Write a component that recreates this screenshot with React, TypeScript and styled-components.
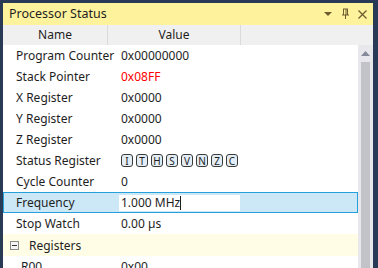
import styled, { createGlobalStyle } from "styled-components";

const Global = createGlobalStyle`
  html, body {
    margin: 0;
    padding: 0;
    background: #293a56;
    overflow: hidden;
  }
  body {
    font-family: "Noto Sans", "Open Sans", sans-serif;
    font-size: 12px;
    color: #1e1e1e;
  }
`;

const Frame = styled.div`
  padding: 3px 5px 0 3px;
  height: 268px;
  box-sizing: border-box;
`;

const Panel = styled.div`
  display: flex;
  flex-direction: column;
  width: 370px;
  height: 265px;
  background: #ffffff;
  overflow: hidden;
`;

const TitleBar = styled.div`
  display: flex;
  align-items: center;
  height: 22px;
  background: #fff29d;
  padding: 0 5px 0 6px;
  flex-shrink: 0;
`;

const Title = styled.div`
  flex: 1;
  font-size: 12.5px;
  line-height: 22px;
  color: #1e1e1e;
`;

const TitleIcons = styled.div`
  display: flex;
  align-items: center;
  gap: 7px;
`;

const Header = styled.div`
  display: flex;
  height: 20px;
  background: #f0f0f0;
  flex-shrink: 0;
`;

const HeadCell = styled.div<{ $w?: number }>`
  width: ${(p) => (p.$w ? `${p.$w}px` : "auto")};
  flex: ${(p) => (p.$w ? "none" : "1")};
  text-align: center;
  line-height: 19px;
  border-right: ${(p) => (p.$w ? "1px solid #dadada" : "none")};
  box-sizing: border-box;
`;

const Body = styled.div`
  display: flex;
  flex: 1;
  min-height: 0;
`;

const List = styled.div`
  flex: 1;
  overflow: hidden;
`;

const Row = styled.div<{ $selected?: boolean; $group?: boolean }>`
  display: flex;
  align-items: center;
  height: ${(p) => (p.$group ? 22 : 21)}px;
  box-sizing: border-box;
  background: ${(p) =>
    p.$selected ? "#cce8f6" : p.$group ? "#fffde6" : "transparent"};
  border: 1px solid ${(p) => (p.$selected ? "#26a0da" : "transparent")};
`;

const NameCell = styled.div<{ $indent?: number }>`
  width: 104px;
  flex: none;
  padding-left: ${(p) => p.$indent ?? 12}px;
  box-sizing: border-box;
  white-space: nowrap;
`;

const ValueCell = styled.div<{ $red?: boolean }>`
  flex: 1;
  padding-left: 13px;
  color: ${(p) => (p.$red ? "#ff0000" : "#1e1e1e")};
  white-space: nowrap;
  display: flex;
  align-items: center;
`;

const Editor = styled.div`
  width: 121px;
  height: 16px;
  margin-left: 11px;
  padding-left: 2px;
  background: #ffffff;
  display: flex;
  align-items: center;
  box-sizing: border-box;
`;

const Caret = styled.span`
  display: inline-block;
  width: 1px;
  height: 14px;
  background: #1e1e1e;
`;

const Flags = styled.div`
  display: flex;
  gap: 3px;
`;

const Flag = styled.span`
  display: inline-flex;
  align-items: center;
  justify-content: center;
  width: 12px;
  height: 13px;
  border: 1px solid #3a3a3a;
  border-radius: 3px;
  background: #e3edf5;
  font-size: 10px;
  line-height: 1;
  box-sizing: border-box;
`;

const GroupToggle = styled.span`
  display: inline-flex;
  align-items: center;
  justify-content: center;
  width: 9px;
  height: 9px;
  border: 1px solid #8b8b8b;
  background: #f4f4f4;
  margin: 0 10px 0 6px;
  box-sizing: border-box;
  &::after {
    content: "";
    width: 5px;
    height: 1px;
    background: #333;
  }
`;

const GroupName = styled.div`
  display: flex;
  align-items: center;
`;

const Scrollbar = styled.div`
  width: 15px;
  flex: none;
  background: #e8e8ec;
  display: flex;
  flex-direction: column;
  align-items: center;
  padding-top: 6px;
  box-sizing: border-box;
`;

const Thumb = styled.div`
  width: 9px;
  flex: 1;
  margin-top: 6px;
  background: #c2c3c9;
`;

const rows: [string, string, boolean?][] = [
  ["Program Counter", "0x00000000"],
  ["Stack Pointer", "0x08FF", true],
  ["X Register", "0x0000"],
  ["Y Register", "0x0000"],
  ["Z Register", "0x0000"],
];

const flags = ["I", "T", "H", "S", "V", "N", "Z", "C"];

export default function App() {
  return (
    <>
      <Global />
      <Frame>
        <Panel>
          <TitleBar>
            <Title>Processor Status</Title>
            <TitleIcons>
              <svg width="10" height="10" viewBox="0 0 10 10">
                <path d="M1 3h8L5 7z" fill="#6b5d2e" />
              </svg>
              <svg width="10" height="12" viewBox="0 0 10 12">
                <path
                  d="M3 1h5M3.5 1v6M7.5 1v6M6 1v6M2 7h7M5.5 7v4"
                  stroke="#6b5d2e"
                  strokeWidth="1"
                  fill="none"
                />
              </svg>
              <svg width="11" height="11" viewBox="0 0 11 11">
                <path d="M1.5 1.5l8 8M9.5 1.5l-8 8" stroke="#6b5d2e" strokeWidth="1.3" />
              </svg>
            </TitleIcons>
          </TitleBar>
          <Header>
            <HeadCell $w={105}>Name</HeadCell>
            <HeadCell $w={133}>Value</HeadCell>
            <HeadCell />
          </Header>
          <Body>
            <List>
              {rows.map(([n, v, red]) => (
                <Row key={n}>
                  <NameCell>{n}</NameCell>
                  <ValueCell $red={red}>{v}</ValueCell>
                </Row>
              ))}
              <Row>
                <NameCell>Status Register</NameCell>
                <ValueCell>
                  <Flags>
                    {flags.map((f) => (
                      <Flag key={f}>{f}</Flag>
                    ))}
                  </Flags>
                </ValueCell>
              </Row>
              <Row>
                <NameCell>Cycle Counter</NameCell>
                <ValueCell>0</ValueCell>
              </Row>
              <Row $selected>
                <NameCell>Frequency</NameCell>
                <Editor>
                  1.000 MHz
                  <Caret />
                </Editor>
              </Row>
              <Row>
                <NameCell>Stop Watch</NameCell>
                <ValueCell>0.00 µs</ValueCell>
              </Row>
              <Row $group>
                <GroupName>
                  <GroupToggle />
                  Registers
                </GroupName>
              </Row>
              <Row>
                <NameCell $indent={17}>R00</NameCell>
                <ValueCell>0x00</ValueCell>
              </Row>
            </List>
            <Scrollbar>
              <svg width="9" height="5" viewBox="0 0 9 5">
                <path d="M0 5L4.5 0L9 5z" fill="#868999" />
              </svg>
              <Thumb />
            </Scrollbar>
          </Body>
        </Panel>
      </Frame>
    </>
  );
}
